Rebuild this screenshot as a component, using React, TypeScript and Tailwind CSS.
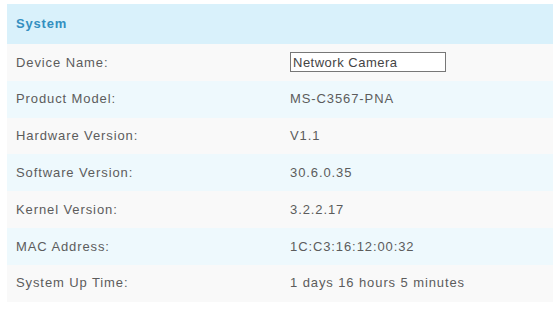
export default function App() {
  const rows: [string, string][] = [
    ['Device Name:', ''],
    ['Product Model:', 'MS-C3567-PNA'],
    ['Hardware Version:', 'V1.1'],
    ['Software Version:', '30.6.0.35'],
    ['Kernel Version:', '3.2.2.17'],
    ['MAC Address:', '1C:C3:16:12:00:32'],
    ['System Up Time:', '1 days 16 hours 5 minutes'],
  ]

  return (
    <div className="w-[557px] h-[309px] bg-white pt-[4px] pl-[7px] pr-[4px] font-['Liberation_Sans',Arial,sans-serif]">
      <div className="h-[40px] bg-[#d9f1fb] flex items-center pl-[9px]">
        <span className="text-[13px] font-bold tracking-[0.8px] text-[#338fc0]">System</span>
      </div>
      {rows.map(([label, value], i) => (
        <div
          key={label}
          className={`h-[36.8px] grid grid-cols-[283px_1fr] items-center text-[13px] tracking-[0.9px] text-[#5c5c5c] ${i % 2 === 0 ? 'bg-[#f9f9f9]' : 'bg-[#eef9fd]'}`}
        >
          <div className="pl-[9px]">{label}</div>
          {i === 0 ? (
            <input
              readOnly
              value="Network Camera"
              className="w-[156px] h-[20px] border border-[#777] bg-white px-[2px] text-[13px] tracking-[0.5px] text-[#444] outline-none"
            />
          ) : (
            <div>{value}</div>
          )}
        </div>
      ))}
    </div>
  )
}
